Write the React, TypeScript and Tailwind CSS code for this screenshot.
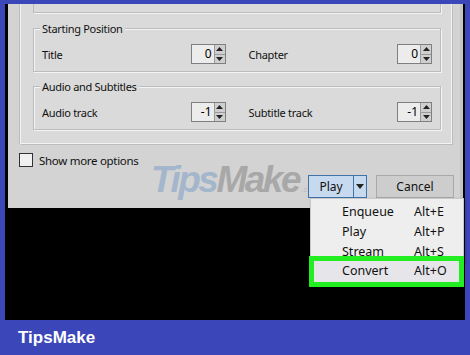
import React from "react";

const font = { fontFamily: '"Noto Sans", "Open Sans", sans-serif' };

function Spin({ value }: { value: string }) {
  return (
    <div className="flex h-[20px] w-[35px] border border-[#7f7f7f] bg-[#ececec]">
      <div className="flex flex-1 items-center justify-end pr-[2px] text-[12px] leading-none text-black">{value}</div>
      <div className="flex w-[11px] flex-col border-l border-[#9a9a9a] bg-[#cfcfcf]">
        <div className="flex flex-1 items-center justify-center border-b border-[#9a9a9a]">
          <svg width="7" height="4" viewBox="0 0 7 4"><path d="M0 4 L3.5 0 L7 4Z" fill="#222" /></svg>
        </div>
        <div className="flex flex-1 items-center justify-center">
          <svg width="7" height="4" viewBox="0 0 7 4"><path d="M0 0 L3.5 4 L7 0Z" fill="#222" /></svg>
        </div>
      </div>
    </div>
  );
}

function Group({ label, a, av, b, bv }: { label: string; a: string; av: string; b: string; bv: string }) {
  return (
    <div className="relative h-[44px] border border-[#bcbcbc] shadow-[inset_1px_1px_0_#f4f4f4,1px_1px_0_#f4f4f4]">
      <div className="absolute left-[6px] top-[-8px] bg-[#dadada] px-[2px] text-[11px] leading-[16px] tracking-[-0.3px] text-[#111]">{label}</div>
      <div className="grid grid-cols-2 gap-x-[23px] px-[8px] pt-[15px]">
        <div className="flex items-center justify-between">
          <span className="mt-[3px] text-[11px] tracking-[-0.3px] text-[#111]">{a}</span>
          <Spin value={av} />
        </div>
        <div className="flex items-center justify-between">
          <span className="mt-[3px] text-[11px] tracking-[-0.3px] text-[#111]">{b}</span>
          <Spin value={bv} />
        </div>
      </div>
    </div>
  );
}

export default function App() {
  return (
    <div className="relative h-[355px] w-[470px] overflow-hidden bg-[#3b46b8]" style={font}>
      <div className="px-[5px] pt-[4px]">
        <div className="h-[316px] w-[460px] bg-black pl-[3px]">
          <div className="relative flex h-[204px] w-[455px] flex-col bg-[#d3d3d3] border-r-[3px] border-[#c4c4c4]">
            <div className="ml-[12px] mr-[8px] h-[140px] border-x border-b border-[#f2f2f2] bg-[#dadada] pl-[12px] pr-[10px] shadow-[-1px_0_0_#bdbdbd,1px_1px_0_#bdbdbd]">
              <div className="h-[9px] border-x border-b border-[#bcbcbc] shadow-[1px_1px_0_#f4f4f4]" />
              <div className="mt-[15px]">
                <Group label="Starting Position" a="Title" av="0" b="Chapter" bv="0" />
              </div>
              <div className="mt-[14px]">
                <Group label="Audio and Subtitles" a="Audio track" av="-1" b="Subtitle track" bv="-1" />
              </div>
            </div>
            <div className="ml-[11px] mt-[9px] flex items-center gap-[6px]">
              <div className="h-[14px] w-[14px] border border-[#333] bg-[#f0f0f0]" />
              <span className="mt-[1px] text-[11.5px] leading-none tracking-[-0.3px] text-[#111]">Show more options</span>
            </div>
            <div className="absolute left-[143px] top-[157px] flex items-end leading-none select-none" style={{ fontFamily: '"Liberation Sans", Arial, sans-serif' }}>
              <span className="text-[37px] font-black italic tracking-[-2.5px] text-[#a3b6cc]">Tips</span>
              <span className="text-[37px] font-black italic tracking-[-2.5px] text-[#a8a8a8]">Make</span>
              <span className="mb-[4px] ml-[2px] text-[8px] text-[#bdbdbd]">.com</span>
            </div>
            <div className="relative mr-[6px] mt-[8px] flex justify-end gap-[9px]">
              <div className="flex h-[23px] w-[59px] border border-[#3f73a8] bg-[#c6d9ee]">
                <div className="flex flex-1 items-center justify-center text-[12px] text-[#111]">Play</div>
                <div className="flex w-[13px] items-center justify-center border-l border-[#3f73a8]">
                  <svg width="8" height="5" viewBox="0 0 8 5"><path d="M0 0 L4 5 L8 0Z" fill="#222" /></svg>
                </div>
              </div>
              <div className="flex h-[23px] w-[78px] items-center justify-center border border-[#a9a9a9] bg-[#cdcdcd] text-[12px] text-[#111]">Cancel</div>
            </div>
          </div>
        </div>
      </div>
      <div className="absolute left-[18px] top-[327px] text-[17px] font-bold leading-[22px] text-white" style={{ fontFamily: '"Liberation Sans", Arial, sans-serif' }}>TipsMake</div>
      <div className="absolute left-[310px] top-[198px] w-[154px] border border-[#c9c9c9] bg-[#eeeeee] pt-[3px] shadow-[1px_1px_2px_rgba(0,0,0,0.4)]" >
        {[
          ["Enqueue", "Alt+E"],
          ["Play", "Alt+P"],
          ["Stream", "Alt+S"],
        ].map(([l, s]) => (
          <div key={l} className="flex h-[20px] items-center text-[12.5px] text-[#111]">
            <span className="ml-[31px] w-[72px]">{l}</span>
            <span>{s}</span>
          </div>
        ))}
      </div>
      <div className="absolute left-[309px] top-[256px] h-[31px] w-[155px] border-[5px] border-[#22ee22] bg-[#e6e6ea]">
        <div className="flex h-[21px] items-center text-[12.5px] text-[#111]">
          <span className="ml-[28px] w-[72px]">Convert</span>
          <span>Alt+O</span>
        </div>
      </div>
    </div>
  );
}
